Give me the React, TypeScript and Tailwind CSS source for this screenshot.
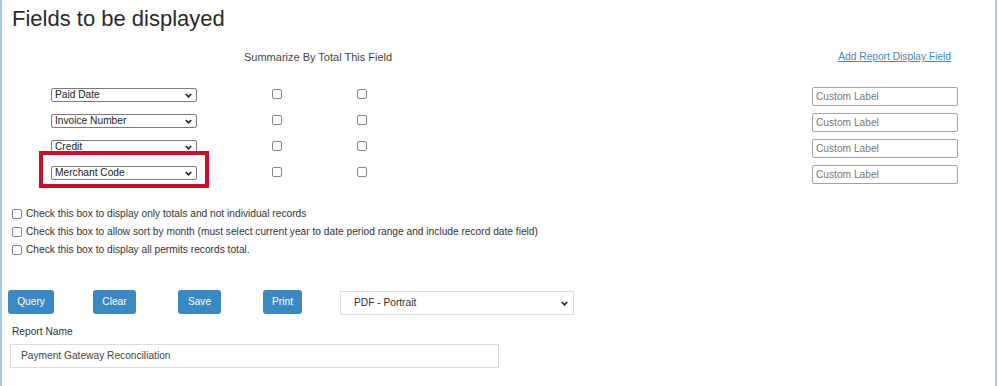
import React from 'react';

const fields = ['Paid Date', 'Invoice Number', 'Credit', 'Merchant Code'];

const options = [
  'Check this box to display only totals and not individual records',
  'Check this box to allow sort by month (must select current year to date period range and include record date field)',
  'Check this box to display all permits records total.',
];

const buttons = [
  { label: 'Query', w: 'w-[46px]', ml: 'ml-0' },
  { label: 'Clear', w: 'w-[43px]', ml: 'ml-[39px]' },
  { label: 'Save', w: 'w-[43px]', ml: 'ml-[42px]' },
  { label: 'Print', w: 'w-[39px]', ml: 'ml-[42px]' },
];

const Chevron = () => (
  <svg width="7" height="5" viewBox="0 0 7 5" className="shrink-0">
    <polyline points="0.8,1 3.5,3.8 6.2,1" fill="none" stroke="#222" strokeWidth="1.7" />
  </svg>
);

const FieldSelect = ({ value }: { value: string }) => (
  <div className="mt-[1px] flex h-[14px] w-[146px] items-center justify-between rounded-[2px] border border-[#7a7a7a] bg-white pl-[3px] pr-[4px] text-[10.2px] leading-none text-[#222]">
    <span>{value}</span>
    <Chevron />
  </div>
);

const Box = ({ className = '' }: { className?: string }) => (
  <span className={`block h-[10px] w-[10px] shrink-0 rounded-[2px] border border-[#858585] bg-white ${className}`} />
);

export default function App() {
  return (
    <div className="h-[386px] w-[998px] overflow-hidden bg-white font-['Liberation_Sans',Arial,sans-serif] text-[#333]">
      <div className="h-full w-[997px] border-x-2 border-[#a6c9ea] pl-[10px]">
        <h1 className="pt-[6px] text-[22px] leading-[26px] text-[#2b2b2b]">Fields to be displayed</h1>

        <div className="mt-[18px] flex h-[14px] items-end text-[11px] leading-[14px]">
          <span className="ml-[232px] text-[#444]">Summarize By Total This Field</span>
          <a href="#" className="ml-auto mr-[44px] text-[10.2px] text-[#3d8bcb] underline">
            Add Report Display Field
          </a>
        </div>

        <div className="mt-[23px]">
          {fields.map((f, i) => (
            <div key={f} className="flex h-[26px] items-start">
              <div className="relative ml-[39px]">
                <FieldSelect value={f} />
                {i === fields.length - 1 && (
                  <div className="pointer-events-none absolute left-[-12px] top-[-14px] h-[37px] w-[170px] border-4 border-[#c8102e]" />
                )}
              </div>
              <Box className="ml-[75px] mt-[2px]" />
              <Box className="ml-[75px] mt-[2px]" />
              <div className="ml-[445px] flex h-[19px] w-[146px] items-center rounded-[2px] border border-[#a3a3a3] pl-[3px] text-[10.2px] text-[#777]">
                Custom Label
              </div>
            </div>
          ))}
        </div>

        <div className="mt-[14px]">
          {options.map((o) => (
            <div key={o} className="flex h-[18px] items-center">
              <Box />
              <span className="ml-[4px] text-[10.2px] text-[#333]">{o}</span>
            </div>
          ))}
        </div>

        <div className="-ml-[4px] mt-[31px] flex h-[25px] items-start">
          {buttons.map((b) => (
            <button
              key={b.label}
              className={`${b.w} ${b.ml} h-[24px] rounded-[3px] bg-[#3a89c2] text-[10.2px] text-white`}
            >
              {b.label}
            </button>
          ))}
          <div className="ml-[38px] mt-[1px] flex h-[24px] w-[234px] items-center justify-between border border-[#ddd] pl-[13px] pr-[5px] text-[10.2px] text-[#333]">
            <span>PDF - Portrait</span>
            <Chevron />
          </div>
        </div>

        <div className="mt-[10px] text-[10.2px] leading-[14px] text-[#333]">Report Name</div>
        <div className="-ml-[2px] mt-[5px] flex h-[24px] w-[489px] items-center border border-[#ddd] pl-[10px] text-[10.2px] text-[#444]">
          Payment Gateway Reconciliation
        </div>
      </div>
    </div>
  );
}
